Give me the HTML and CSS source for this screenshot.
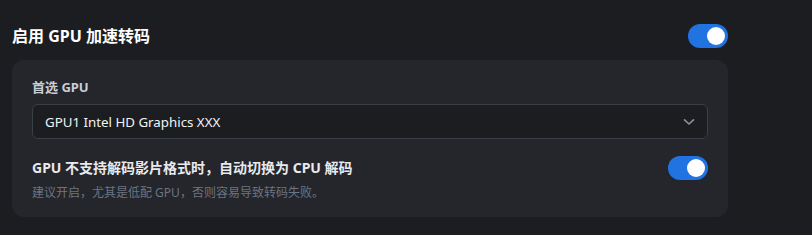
FILE: index.html
```html
<!DOCTYPE html>
<html lang="zh-CN">
<head>
<meta charset="utf-8">
<title>GPU 加速转码</title>
<link rel="stylesheet" href="styles.css">
</head>
<body>
<div class="page">
  <div class="header">
    <h2 class="title">启用 GPU 加速转码</h2>
    <span class="toggle on"><span class="knob"></span></span>
  </div>
  <div class="card">
    <div class="label">首选 GPU</div>
    <div class="select">
      <span class="select-text">GPU1 Intel HD Graphics XXX</span>
      <svg class="chevron" width="12" height="8" viewBox="0 0 12 8"><path d="M1.5 1.8 L6 6 L10.5 1.8" fill="none" stroke="#8b919b" stroke-width="1.6" stroke-linecap="round" stroke-linejoin="round"/></svg>
    </div>
    <div class="row">
      <div class="row-text">
        <div class="row-title">GPU 不支持解码影片格式时，自动切换为 CPU 解码</div>
        <div class="row-desc">建议开启，尤其是低配 GPU，否则容易导致转码失败。</div>
      </div>
      <span class="toggle on"><span class="knob"></span></span>
    </div>
  </div>
</div>
</body>
</html>
```

FILE: styles.css
```css
* { box-sizing: border-box; }
html, body {
  margin: 0;
  background: #1b1d21;
}
body {
  font-family: "Noto Sans", "Noto Sans CJK SC", sans-serif;
  color: #f2f3f5;
}
.page {
  width: 716px;
  margin-left: 12px;
  padding-top: 24px;
}
.header {
  display: flex;
  align-items: center;
  justify-content: space-between;
  height: 24px;
}
.title {
  margin: 0;
  font-size: 16px;
  font-weight: 700;
  line-height: 24px;
  color: #ffffff;
}
.toggle {
  display: flex;
  align-items: center;
  justify-content: flex-end;
  width: 40px;
  height: 24px;
  border-radius: 12px;
  background: #2273e2;
  padding: 0 3px;
  flex: none;
}
.knob {
  width: 18px;
  height: 18px;
  border-radius: 50%;
  background: #ffffff;
}
.card {
  margin-top: 12px;
  background: #24262b;
  border-radius: 12px;
  padding: 18px 20px 16px;
}
.label {
  font-size: 13px;
  font-weight: 700;
  line-height: 18px;
  color: #c9ced6;
}
.select {
  margin-top: 8px;
  height: 35px;
  display: flex;
  align-items: center;
  justify-content: space-between;
  border: 1px solid #3a3e45;
  border-radius: 6px;
  background: #1b1d21;
  padding: 0 12px 0 12px;
}
.select-text {
  font-size: 13.3px;
  color: #f2f3f5;
}
.chevron { display: block; }
.row {
  margin-top: 17px;
  display: flex;
  align-items: flex-start;
  justify-content: space-between;
}
.row-title {
  font-size: 14px;
  font-weight: 700;
  line-height: 24px;
  color: #e8eaee;
}
.row-desc {
  margin-top: 4px;
  font-size: 12px;
  line-height: 17px;
  color: #6c7482;
}
```
